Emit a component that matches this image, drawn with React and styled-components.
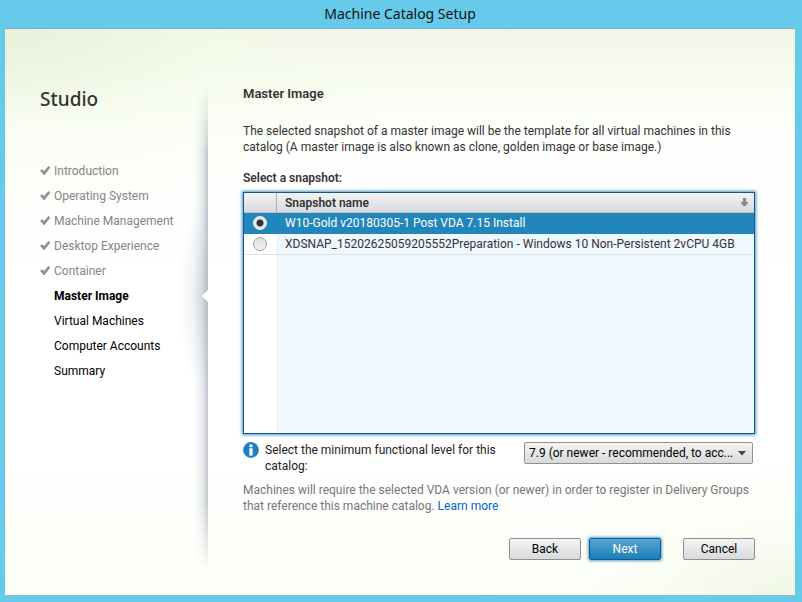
import React, { useState } from "react";
import styled, { createGlobalStyle, css } from "styled-components";

const GlobalStyle = createGlobalStyle`
  *, *::before, *::after { box-sizing: border-box; }
  body { margin: 0; }
  body, button, select, input {
    font-family: Roboto, "Open Sans", sans-serif;
    font-size: 12px;
    line-height: 16px;
    color: #333;
  }
`;

const Window = styled.div`
  min-height: 100vh;
  display: flex;
  flex-direction: column;
  padding: 0 7px 6px 5px;
  background: #66caea;
`;

const TitleBar = styled.header`
  height: 29px;
  display: flex;
  align-items: center;
  justify-content: center;
  border-bottom: 1px solid #7fa9c6;
  font-family: "Noto Sans", sans-serif;
  font-size: 14px;
  line-height: 20px;
  color: #111;
`;

const Panel = styled.div`
  flex: 1;
  display: grid;
  grid-template-columns: 203px minmax(0, 1fr);
  border-bottom: 1px solid #8fbccb;
  background:
    radial-gradient(ellipse 420px 190px at 0 0, #e9f0da, rgba(244, 251, 233, 0.5) 50%, rgba(255, 255, 255, 0)),
    radial-gradient(ellipse 320px 130px at 100% 100%, #f1f7e6, rgba(251, 254, 246, 0.6) 60%, rgba(255, 255, 255, 0)),
    linear-gradient(#f1f5e8, #f7fcef 45px, #fefffd 110px, #ffffff 75%, #fcfff7);
`;

const Sidebar = styled.aside`
  position: relative;
  padding: 56px 0 23px 35px;

  &::before {
    content: "";
    position: absolute;
    top: 56px;
    right: 0;
    bottom: 23px;
    width: 32px;
    background:
      radial-gradient(ellipse 30px 100px at 100% 211px, rgba(130, 140, 155, 0.25), rgba(140, 150, 165, 0.1) 60%, rgba(150, 160, 175, 0)),
      linear-gradient(to left, rgba(120, 130, 145, 0.45), rgba(150, 160, 175, 0.2) 6px, rgba(150, 160, 175, 0) 14px);
    mask-image: linear-gradient(transparent, #000 70px, #000 calc(100% - 70px), transparent);
  }

  &::after {
    content: "";
    position: absolute;
    top: 261px;
    right: 0;
    width: 6px;
    height: 12px;
    background: #fff;
    clip-path: polygon(100% 0, 0 50%, 100% 100%);
  }
`;

const Brand = styled.h1`
  margin: 0;
  font-family: "Noto Sans", sans-serif;
  font-size: 19px;
  font-weight: 500;
  line-height: 28px;
  color: #333;
`;

const Steps = styled.ol`
  list-style: none;
  margin: 45px 0 0;
  padding: 0;
`;

const Step = styled.li`
  display: flex;
  align-items: center;
  height: 25px;
  color: ${(p) => (p.$state === "done" ? "#858585" : "#000")};
  font-weight: ${(p) => (p.$state === "current" ? 700 : 400)};
`;

const Mark = styled.span`
  display: flex;
  width: 14px;
  flex: none;
`;

const Content = styled.main`
  display: flex;
  flex-direction: column;
  padding: 56px 40px 35px 35px;
`;

const Heading = styled.h2`
  margin: 0;
  font-size: 13px;
  font-weight: 600;
  line-height: 18px;
`;

const Intro = styled.p`
  margin: 20px 0 0;
`;

const Caption = styled.h3`
  margin: 15px 0 6px;
  font-size: 12px;
  font-weight: 600;
  line-height: 16px;
`;

const ListBox = styled.div`
  flex: 1;
  min-height: 120px;
  border: 1px solid #10589c;
  box-shadow: 0 0 3px 1px #4b93b9;
  background: linear-gradient(to right, #fff 32px, #eff7ff 32px);
`;

const Table = styled.table`
  width: 100%;
  border-collapse: separate;
  border-spacing: 0;
  table-layout: fixed;
`;

const HeadCell = styled.th`
  width: ${(p) => (p.$pick ? "33px" : "auto")};
  height: 20px;
  padding: ${(p) => (p.$pick ? "0" : "0 6px 0 8px")};
  text-align: left;
  font-weight: 600;
  background: linear-gradient(#f3f3f4, #d9dadc);
  border-bottom: 1px solid #c3c5c8;
  border-right: ${(p) => (p.$pick ? "1px solid #a9abae" : "0")};
`;

const HeadLine = styled.div`
  display: flex;
  align-items: center;
  justify-content: space-between;
`;

const Row = styled.tr`
  cursor: pointer;
  ${(p) =>
    p.$selected &&
    css`
      color: #fff;
      background: #2386bb;
    `}
`;

const Cell = styled.td`
  height: 21px;
  padding: ${(p) => (p.$pick ? "0 0 0 9px" : "0 8px")};
  white-space: nowrap;
  border-bottom: 1px solid ${(p) => (p.$selected ? "#2386bb" : "#dde3e8")};
`;

const Radio = styled.input`
  appearance: none;
  display: block;
  width: 14px;
  height: 14px;
  margin: 0;
  border: 1px solid #9fa2a4;
  border-radius: 50%;
  background: linear-gradient(#dcdcdc, #f3f3f3);

  &:checked {
    border-color: #f3f6f8;
    background: radial-gradient(circle, #333 3px, #e4e4e4 4px);
  }
`;

const LevelRow = styled.div`
  display: flex;
  align-items: flex-start;
  gap: 6px;
  margin: 8px 2px 0 0;
`;

const LevelLabel = styled.label`
  flex: 1;
  padding-right: 16px;
  color: #222;
`;

const SelectWrap = styled.div`
  position: relative;
  flex: 0 0 229px;

  svg {
    position: absolute;
    right: 7px;
    top: 9px;
    pointer-events: none;
  }
`;

const buttonFace = css`
  border: 1px solid #8d8f91;
  border-radius: 2px;
  background: linear-gradient(#f4f4f4, #d9dadb);
  color: #000;
`;

const Select = styled.select`
  ${buttonFace}
  appearance: none;
  display: block;
  width: 100%;
  height: 22px;
  padding: 0 16px 0 4px;
`;

const Note = styled.p`
  margin: 8px 0 0;
  color: #767676;
`;

const Link = styled.a`
  color: #0066cc;
  text-decoration: none;
`;

const Actions = styled.footer`
  display: flex;
  justify-content: flex-end;
  margin-top: 24px;
`;

const Button = styled.button`
  ${buttonFace}
  width: 72px;
  height: 22px;
  padding: 0;
  margin-left: ${(p) => (p.$apart ? "22px" : "8px")};
  ${(p) =>
    p.$primary &&
    css`
      border-color: #10589c;
      background: linear-gradient(#57a5d0, #1b7eb7);
      box-shadow: 0 0 3px 1px #5d9fc2;
      color: #fff;
    `}
`;

const CheckIcon = () => (
  <svg width="11" height="10" viewBox="0 0 11 10" aria-hidden="true">
    <path d="M0 4.7 L2.1 3.3 L4.1 5 L8.4 0 L10.4 1.5 L4.6 9 L3.8 9 Z" fill="#8f9294" />
  </svg>
);

const SortIcon = () => (
  <svg width="7" height="9" viewBox="0 0 7 9" aria-hidden="true">
    <path d="M2 0H5V4H7V5L4.5 8H2.5L0 5V4H2Z" fill="#85878a" />
  </svg>
);

const CaretIcon = () => (
  <svg width="8" height="5" viewBox="0 0 8 5" aria-hidden="true">
    <path d="M0 0H8L4 4.6Z" fill="#444" />
  </svg>
);

const InfoIcon = () => (
  <svg width="16" height="16" viewBox="0 0 16 16" aria-hidden="true">
    <circle cx="8" cy="8" r="7.9" fill="#2080c3" />
    <rect x="6.4" y="2.4" width="3.2" height="2.8" rx="0.8" fill="#fff" />
    <rect x="6.4" y="6.2" width="3.2" height="7.4" fill="#fff" />
  </svg>
);

const steps = [
  ["Introduction", "done"],
  ["Operating System", "done"],
  ["Machine Management", "done"],
  ["Desktop Experience", "done"],
  ["Container", "done"],
  ["Master Image", "current"],
  ["Virtual Machines", "next"],
  ["Computer Accounts", "next"],
  ["Summary", "next"],
];

const snapshots = [
  "W10-Gold v20180305-1 Post VDA 7.15 Install",
  "XDSNAP_15202625059205552Preparation - Windows 10 Non-Persistent 2vCPU 4GB",
];

export default function App() {
  const [selected, setSelected] = useState(0);
  return (
    <Window>
      <GlobalStyle />
      <TitleBar>Machine Catalog Setup</TitleBar>
      <Panel>
        <Sidebar>
          <Brand>Studio</Brand>
          <Steps>
            {steps.map(([name, state]) => (
              <Step key={name} $state={state} aria-current={state === "current" ? "step" : undefined}>
                <Mark>{state === "done" && <CheckIcon />}</Mark>
                {name}
              </Step>
            ))}
          </Steps>
        </Sidebar>
        <Content>
          <Heading>Master Image</Heading>
          <Intro>
            The selected snapshot of a master image will be the template for all virtual machines in this catalog (A
            master image is also known as clone, golden image or base image.)
          </Intro>
          <Caption id="snapshot-caption">Select a snapshot:</Caption>
          <ListBox>
            <Table aria-labelledby="snapshot-caption">
              <thead>
                <tr>
                  <HeadCell $pick />
                  <HeadCell scope="col">
                    <HeadLine>
                      Snapshot name
                      <SortIcon />
                    </HeadLine>
                  </HeadCell>
                </tr>
              </thead>
              <tbody>
                {snapshots.map((name, i) => (
                  <Row key={name} $selected={selected === i}>
                    <Cell $pick $selected={selected === i}>
                      <Radio
                        type="radio"
                        name="snapshot"
                        id={`snapshot-${i}`}
                        checked={selected === i}
                        onChange={() => setSelected(i)}
                      />
                    </Cell>
                    <Cell $selected={selected === i}>
                      <label htmlFor={`snapshot-${i}`}>{name}</label>
                    </Cell>
                  </Row>
                ))}
              </tbody>
            </Table>
          </ListBox>
          <LevelRow>
            <InfoIcon />
            <LevelLabel htmlFor="level">Select the minimum functional level for this catalog:</LevelLabel>
            <SelectWrap>
              <Select id="level">
                <option>7.9 (or newer - recommended, to acc...</option>
              </Select>
              <CaretIcon />
            </SelectWrap>
          </LevelRow>
          <Note>
            Machines will require the selected VDA version (or newer) in order to register in Delivery Groups that
            reference this machine catalog. <Link href="#learn-more">Learn more</Link>
          </Note>
          <Actions>
            <Button type="button">Back</Button>
            <Button type="button" $primary>Next</Button>
            <Button type="button" $apart>Cancel</Button>
          </Actions>
        </Content>
      </Panel>
    </Window>
  );
}
